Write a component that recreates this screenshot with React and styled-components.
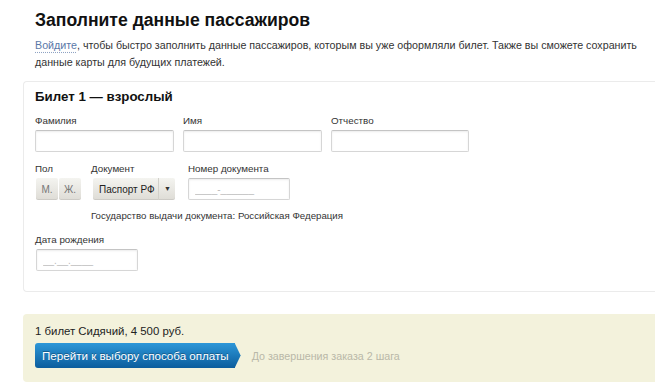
import React from 'react';
import styled, { createGlobalStyle } from 'styled-components';

const Global = createGlobalStyle`
  body {
    margin: 0;
    background: #fff;
    font-family: "Liberation Sans", Arial, sans-serif;
    color: #222;
  }
`;

const Page = styled.div`
  width: 659px;
  padding-top: 8px;
`;

const Intro = styled.div`
  padding-left: 35px;
  padding-right: 10px;
`;

const Title = styled.h1`
  margin: 0;
  font-size: 17.6px;
  line-height: 24px;
  font-weight: bold;
  color: #111;
`;

const Lead = styled.p`
  margin: 5px 0 0;
  font-size: 10.7px;
  line-height: 17px;
  color: #333;
`;

const Login = styled.a`
  color: #5a78a8;
  text-decoration: underline dotted #8fa3c3;
  text-underline-offset: 3px;
`;

const Card = styled.section`
  margin: 10px 4px 0 23px;
  border: 1px solid #ebebeb;
  border-right: none;
  border-radius: 4px 0 0 4px;
  padding: 7px 11px 20px;
`;

const CardTitle = styled.h2`
  margin: 0;
  font-size: 13.3px;
  line-height: 16px;
  font-weight: bold;
  color: #111;
`;

const Row = styled.div`
  display: flex;
  gap: ${p => p.gap || 9}px;
  margin-top: ${p => p.top || 0}px;
`;

const Field = styled.div`
  display: flex;
  flex-direction: column;
  margin-left: ${p => p.shift || 0}px;
`;

const Label = styled.label`
  font-size: 9.8px;
  line-height: 12px;
  color: #333;
  margin-bottom: 3px;
`;

const Input = styled.input`
  box-sizing: border-box;
  width: ${p => p.w}px;
  height: 22px;
  margin-left: ${p => p.shift || 0}px;
  border: 1px solid #d6d6d6;
  border-top-color: #c4c4c4;
  border-radius: 2px;
  box-shadow: inset 0 1px 2px rgba(0, 0, 0, 0.08);
  font-family: inherit;
  font-size: 10px;
  padding: 0 6px;
  &::placeholder {
    color: #bbb;
  }
`;

const Segment = styled.div`
  display: flex;
  gap: 1px;
  margin-left: 1px;
`;

const GreyBtn = styled.button`
  box-sizing: border-box;
  height: 22px;
  width: ${p => p.w || 22}px;
  border: none;
  border-radius: 2px;
  background: linear-gradient(#f4f4f0, #dedcd6);
  box-shadow: inset 0 -1px 0 rgba(0, 0, 0, 0.08);
  font-family: inherit;
  font-size: 10px;
  white-space: nowrap;
  color: ${p => (p.dark ? '#222' : '#777')};
  padding: 0;
  display: flex;
  align-items: center;
  justify-content: center;
`;

const Select = styled(GreyBtn)`
  justify-content: space-between;
  padding: 0 4px 0 6px;
  margin-left: 2px;
`;

const Caret = styled.span`
  font-size: 7px;
  color: #333;
  border-left: 1px solid #d2d0ca;
  padding-left: 5px;
  line-height: 22px;
`;

const Note = styled.div`
  margin: 10px 0 0 56px;
  font-size: 9.7px;
  line-height: 12px;
  color: #333;
`;

const Footer = styled.div`
  margin: 22px 4px 0 23px;
  background: #f3f2dc;
  border-radius: 4px 0 0 4px;
  padding: 10px 12px 14px;
`;

const Price = styled.div`
  font-size: 11.4px;
  line-height: 14px;
  color: #222;
`;

const Actions = styled.div`
  display: flex;
  align-items: center;
  gap: 11px;
  margin-top: 5px;
`;

const PayBtn = styled.button`
  position: relative;
  height: 25px;
  border: none;
  border-radius: 3px 0 0 3px;
  background: linear-gradient(#2d97d8, #0b5d9d);
  color: #fff;
  font-family: inherit;
  font-size: 11.6px;
  padding: 0 6px 0 7px;
  margin-right: 6px;
  text-shadow: 0 -1px 0 rgba(0, 0, 0, 0.3);
  &::after {
    content: '';
    position: absolute;
    right: -6px;
    top: 0;
    width: 6px;
    height: 25px;
    background: linear-gradient(#2d97d8, #0b5d9d);
    clip-path: polygon(0 0, 100% 50%, 0 100%);
  }
`;

const Steps = styled.span`
  font-size: 10.7px;
  color: #b9b8a8;
`;

export default function App() {
  return (
    <Page>
      <Global />
      <Intro>
        <Title>Заполните данные пассажиров</Title>
        <Lead>
          <Login href="#">Войдите</Login>, чтобы быстро заполнить данные пассажиров, которым вы уже оформляли билет. Также вы сможете сохранить данные карты для будущих платежей.
        </Lead>
      </Intro>

      <Card>
        <CardTitle>Билет 1 — взрослый</CardTitle>
        <Row top={10}>
          <Field>
            <Label>Фамилия</Label>
            <Input w={139} />
          </Field>
          <Field>
            <Label>Имя</Label>
            <Input w={139} />
          </Field>
          <Field>
            <Label>Отчество</Label>
            <Input w={138} />
          </Field>
        </Row>

        <Row top={11} gap={10}>
          <Field>
            <Label>Пол</Label>
            <Segment>
              <GreyBtn>М.</GreyBtn>
              <GreyBtn>Ж.</GreyBtn>
            </Segment>
          </Field>
          <Field>
            <Label>Документ</Label>
            <Select w={82} dark>
              Паспорт РФ <Caret>▼</Caret>
            </Select>
          </Field>
          <Field shift={3}>
            <Label>Номер документа</Label>
            <Input w={102} placeholder="____-______" />
          </Field>
        </Row>
        <Note>Государство выдачи документа: Российская Федерация</Note>

        <Row top={12}>
          <Field>
            <Label>Дата рождения</Label>
            <Input w={102} shift={1} placeholder="__.__.____" />
          </Field>
        </Row>
      </Card>

      <Footer>
        <Price>1 билет Сидячий, 4 500 руб.</Price>
        <Actions>
          <PayBtn>Перейти к выбору способа оплаты</PayBtn>
          <Steps>До завершения заказа 2 шага</Steps>
        </Actions>
      </Footer>
    </Page>
  );
}
